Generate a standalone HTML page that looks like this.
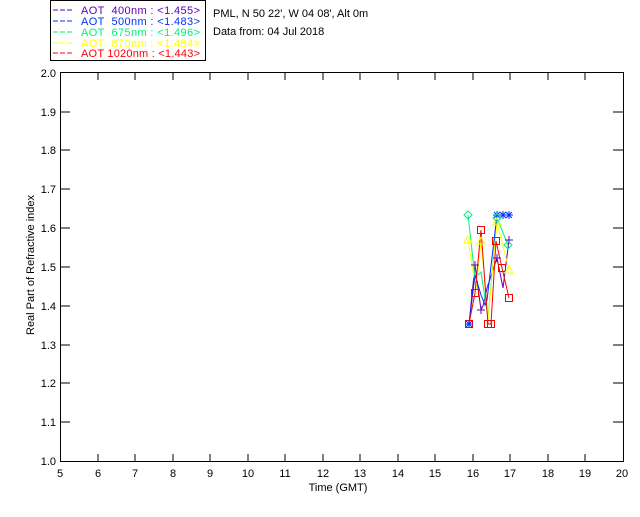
<!DOCTYPE html>
<html><head><style>
body{margin:0;background:#fff;width:640px;height:512px;overflow:hidden}
svg text{font-family:"Liberation Sans",sans-serif;font-size:11px}
</style></head><body>
<svg width="640" height="512" xmlns="http://www.w3.org/2000/svg">
<rect x="50.5" y="0.5" width="155" height="60" fill="none" stroke="#000"/>
<g font-size="11">
<line x1="53" y1="10" x2="74" y2="10" stroke="#6000c0" stroke-dasharray="5,2"/>
<text x="81" y="14" fill="#6000c0" textLength="119" xml:space="preserve">AOT  400nm : &lt;1.455&gt;</text>
<line x1="53" y1="21" x2="74" y2="21" stroke="#0030ff" stroke-dasharray="5,2"/>
<text x="81" y="25" fill="#0030ff" textLength="119" xml:space="preserve">AOT  500nm : &lt;1.483&gt;</text>
<line x1="53" y1="32" x2="74" y2="32" stroke="#00f080" stroke-dasharray="5,2"/>
<text x="81" y="36" fill="#00f080" textLength="119" xml:space="preserve">AOT  675nm : &lt;1.496&gt;</text>
<line x1="53" y1="43" x2="74" y2="43" stroke="#ffff00" stroke-dasharray="5,2"/>
<text x="81" y="47" fill="#ffff00" textLength="119" xml:space="preserve">AOT  870nm : &lt;1.484&gt;</text>
<line x1="53" y1="53" x2="74" y2="53" stroke="#ff0000" stroke-dasharray="5,2"/>
<text x="81" y="57" fill="#ff0000" textLength="119" xml:space="preserve">AOT 1020nm : &lt;1.443&gt;</text>
</g>
<text x="213" y="17">PML, N 50 22', W 04 08', Alt 0m</text>
<text x="213" y="35">Data from: 04 Jul 2018</text>
<rect x="60.5" y="72.5" width="563" height="389" fill="none" stroke="#000"/>
<g stroke="#000">
<path d="M98 461v-7M135 461v-7M173 461v-7M210 461v-7M248 461v-7M285 461v-7M323 461v-7M360 461v-7M398 461v-7M435 461v-7M473 461v-7M510 461v-7M548 461v-7M585 461v-7"/>
<path d="M98 73v7M135 73v7M173 73v7M210 73v7M248 73v7M285 73v7M323 73v7M360 73v7M398 73v7M435 73v7M473 73v7M510 73v7M548 73v7M585 73v7"/>
<path d="M60 422h10M60 383h10M60 345h10M60 306h10M60 267h10M60 228h10M60 189h10M60 150h10M60 112h10"/>
<path d="M623 422h-10M623 383h-10M623 345h-10M623 306h-10M623 267h-10M623 228h-10M623 189h-10M623 150h-10M623 112h-10"/>
</g>
<g text-anchor="middle">
<text x="60" y="477">5</text><text x="98" y="477">6</text><text x="135" y="477">7</text><text x="173" y="477">8</text><text x="210" y="477">9</text><text x="248" y="477">10</text><text x="285" y="477">11</text><text x="323" y="477">12</text><text x="360" y="477">13</text><text x="398" y="477">14</text><text x="435" y="477">15</text><text x="473" y="477">16</text><text x="510" y="477">17</text><text x="548" y="477">18</text><text x="585" y="477">19</text><text x="622" y="477">20</text>
<text x="338" y="491">Time (GMT)</text>
</g>
<g text-anchor="end">
<text x="56" y="465">1.0</text><text x="56" y="426">1.1</text><text x="56" y="387">1.2</text><text x="56" y="349">1.3</text><text x="56" y="310">1.4</text><text x="56" y="271">1.5</text><text x="56" y="232">1.6</text><text x="56" y="193">1.7</text><text x="56" y="154">1.8</text><text x="56" y="116">1.9</text><text x="56" y="77">2.0</text>
</g>
<text transform="translate(34,265) rotate(-90)" text-anchor="middle">Real Part of Refractive index</text>
<g fill="none" stroke-width="1">
<polyline stroke="#6000c0" points="469,324 475,265 481,310 483,306 487,288 497,258 503,288 509,240"/>
<polyline stroke="#00f080" points="468,215 475,278 481,272 488,318 497,218 508,245"/>
<polyline stroke="#ffff00" points="468,240 476,289 481,241 488,320 497,222 509,270"/>
<polyline stroke="#0030ff" points="469,324 475,275 481,295 485,305 487,300 497,215 503,215 509,215"/>
<polyline stroke="#ff0000" points="469,324 475,293 481,230 488,324 491,324 496,241 502,268 509,298"/>
</g>
<g fill="none" stroke="#ff0000" stroke-width="1">
<rect x="465.5" y="320.5" width="7" height="7"/><rect x="471.5" y="289.5" width="7" height="7"/><rect x="477.5" y="226.5" width="7" height="7"/><rect x="484.5" y="320.5" width="7" height="7"/><rect x="487.5" y="320.5" width="7" height="7"/><rect x="492.5" y="237.5" width="7" height="7"/><rect x="498.5" y="264.5" width="7" height="7"/><rect x="505.5" y="294.5" width="7" height="7"/>
</g>
<g stroke="#0030ff" stroke-width="1">
<path d="M493 215h8M497 211v8M494 212l6 6M500 212l-6 6M499 215h8M503 211v8M500 212l6 6M506 212l-6 6M505 215h8M509 211v8M506 212l6 6M512 212l-6 6M465 324h8M469 320v8M466 321l6 6M472 321l-6 6"/>
</g>
<g stroke="#6000c0" stroke-width="1"><path d="M505 240h8M509 236v8M471 265h8M475 261v8M477 310h8M481 306v8M493 258h8M497 254v8"/></g>
<g fill="none" stroke="#ffff00" stroke-width="1"><path d="M464 243l4-7 4 7zM477 244l4-7 4 7zM493 225l4-7 4 7zM505 273l4-7 4 7z"/></g>
<g fill="none" stroke="#00f080" stroke-width="1"><path d="M468 211l4 4-4 4-4-4zM497 214l4 4-4 4-4-4zM508 241l4 4-4 4-4-4z"/></g>
</svg>
</body></html>
